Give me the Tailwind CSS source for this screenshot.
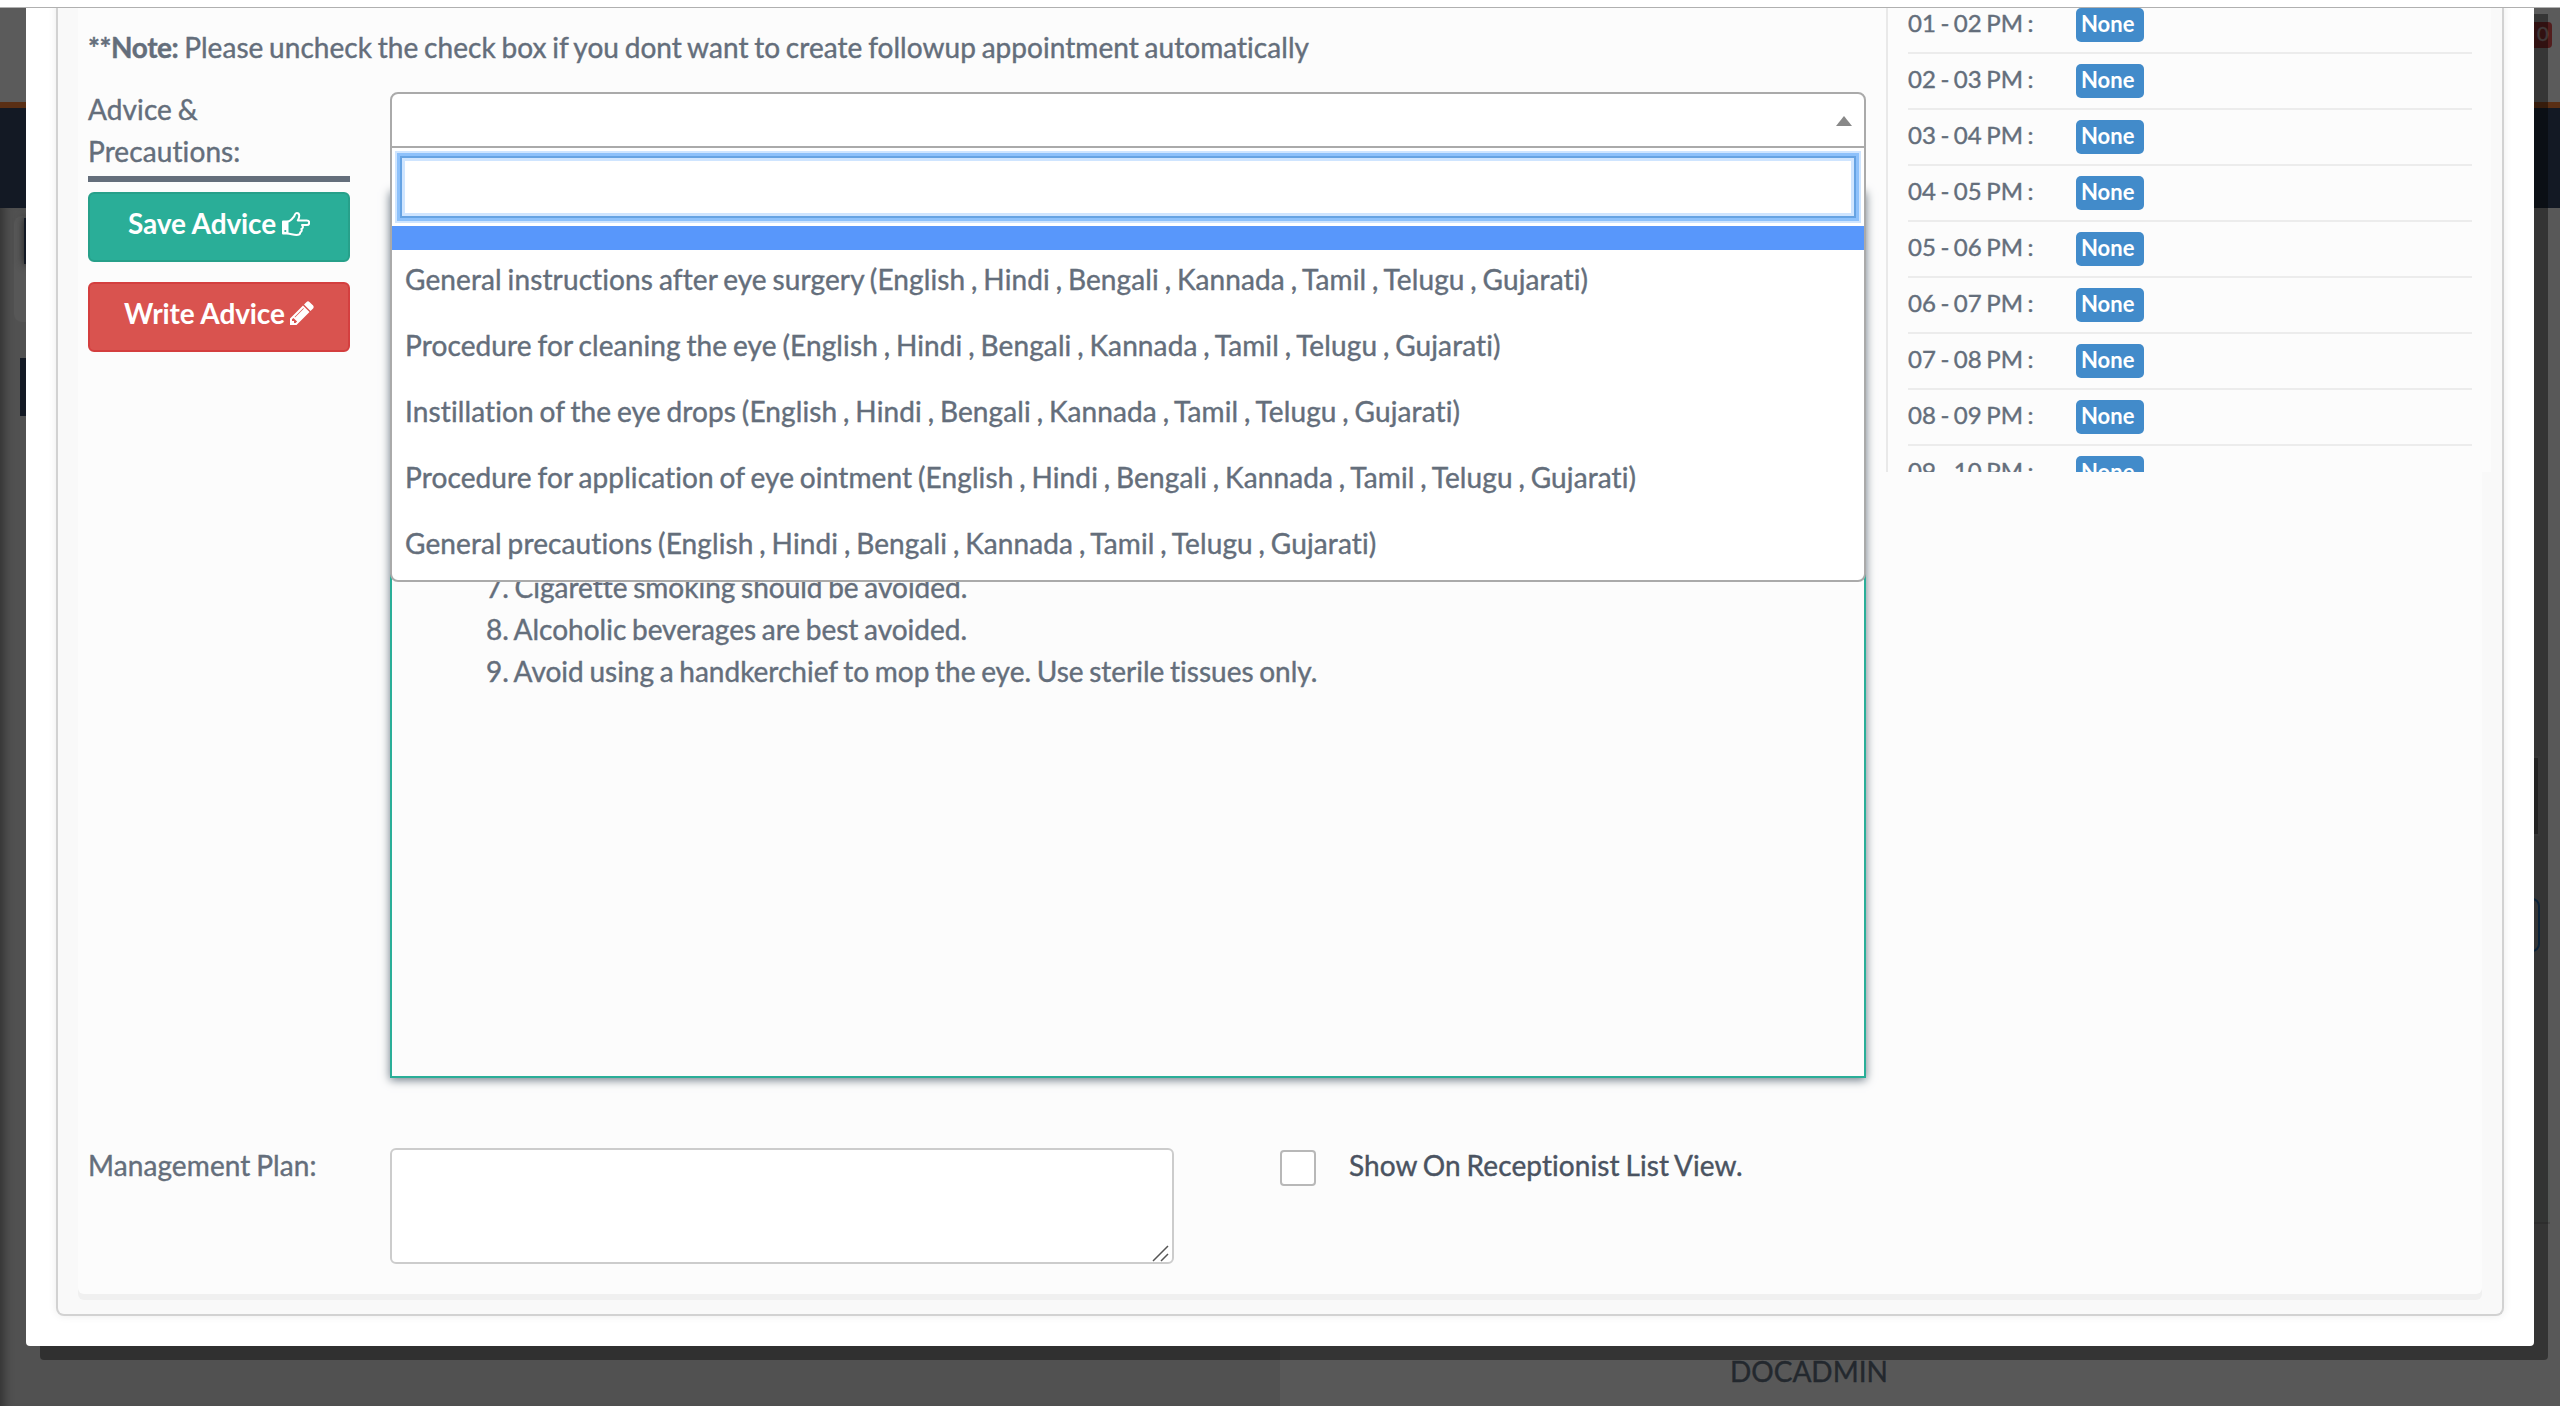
<!DOCTYPE html>
<html lang="en">
<head>
<meta charset="utf-8">
<title>Advice</title>
<script src="https://cdn.jsdelivr.net/npm/@tailwindcss/browser@4"></script>
</head>
<body class="relative h-[1406px] w-[2560px] overflow-hidden bg-[#595959] font-['Lato',sans-serif] text-[28px] leading-[42px] text-[#646e7b] [word-spacing:-1.5px] [font-variant-ligatures:none] [-webkit-text-stroke:0.4px_currentColor]">

<!-- dimmed page behind the modal -->
<div class="absolute inset-0 flex flex-col">
  <div class="h-[102px] bg-[#5b5b5b]"></div>
  <div class="h-[6px] bg-[#5a2f15]"></div>
  <div class="h-[100px] bg-[#131924]"></div>
  <div class="flex flex-1">
    <div class="w-[1280px] bg-[#515151] shadow-[inset_12px_0_10px_-8px_#333]"></div>
    <div class="flex-1 bg-[#585858] pt-[1142px] pl-[450px] text-[#23282e]">DOCADMIN</div>
  </div>
</div>
<div class="absolute top-[216px] left-[14px] h-[106px] w-[40px] rounded-lg bg-[#575757]"></div>
<div class="absolute top-[218px] left-[24px] h-[46px] w-[40px] bg-[#131924] shadow-[0_0_8px_#222]"></div>
<div class="absolute top-[358px] left-[20px] h-[58px] w-[40px] bg-[#131924]"></div>
<div class="absolute top-[22px] left-[2520px] h-[26px] w-[32px] rounded-[4px] bg-[#521d1d] pl-[17px] text-[20px] leading-[23px] text-[#6b6060]">0</div>
<div class="absolute top-[756px] left-[2520px] h-[80px] w-[20px] border-2 border-[#5c5c5c] bg-[#3b3b3b]"></div>
<div class="absolute top-[898px] left-[2500px] h-[54px] w-[40px] rounded-lg border-2 border-[#12395c]"></div>
<div class="absolute top-[1160px] left-[2500px] h-[64px] w-[50px] border-b-2 border-[#4c4c4c] bg-[#545856]"></div>

<!-- modal -->
<div class="absolute top-0 left-[26px] h-[1346px] w-[2508px] rounded-b-[4px] bg-white px-[30px] shadow-[14px_14px_0_rgba(0,0,0,0.4)]">
  <div class="h-[1316px] w-[2448px] rounded-b-[8px] border-2 border-t-0 border-[#d2d2d2] bg-[#f9f9f9] px-[20px] shadow-[0_0_8px_rgba(0,0,0,0.08)]">
    <div class="flex h-[1294px] w-[2404px] rounded-b-[6px] bg-[#fcfcfc] pl-[10px] shadow-[0_6px_0_#f0f0f0]">

      <!-- form column -->
      <div class="flex w-[1798px] shrink-0 flex-col pt-[26px]">
        <p class="h-[62px] tracking-[0.05px]"><b class="tracking-[-0.4px]">**Note:</b> Please uncheck the check box if you dont want to create followup appointment automatically</p>
        <div class="flex h-[1056px]">
          <div class="w-[302px]">
            <div class="h-[94px] w-[262px] border-b-[6px] border-[#646e7b] tracking-[0.1px]">Advice &amp;<br>Precautions:</div>
            <button class="mt-[10px] flex h-[70px] w-[262px] justify-center gap-[6px] rounded-[6px] border-2 border-[#27a08a] bg-[#2aae98] pt-[8px] font-bold text-white [-webkit-text-stroke:0]">
              <span class="tracking-[-0.1px]">Save Advice</span>
              <svg class="mt-[10px] h-[24px] w-[28px]" viewBox="0 0 28 24" fill="none" stroke="#fff" stroke-width="2" stroke-linejoin="round"><path d="M1 9.500h4.500v12H1z" fill="#fff"/><path d="M5.500 9.500c3 0 5-3 6.300-4.700C13 3.200 12.700 1 14.800 1c3.200 0 3 4 1 7.500h9c3.200 0 3.200 4.500 0 4.500H20c1.500 1.600 1 3.500-.6 4 .8 1.800 0 3-1.200 3.400.2 2-1.400 2.600-3.700 2.600-3.500 0-6-1.500-9-1.500"/><circle cx="3.300" cy="19" r="1.100" fill="#2aae98" stroke="none"/></svg>
            </button>
            <button class="mt-[20px] flex h-[70px] w-[262px] justify-center gap-[5px] rounded-[6px] border-2 border-[#d43f3f] bg-[#d9534f] pt-[8px] font-bold text-white [-webkit-text-stroke:0]">
              <span class="tracking-[-0.1px]">Write Advice</span>
              <svg class="mt-[9px] h-[24px] w-[24px]" viewBox="128 128 1536 1536" fill="#fff"><path d="M491 1536l91-91-235-235-91 91v107h128v128h107zm523-928q0-22-22-22-10 0-17 7l-542 542q-7 7-7 17 0 22 22 22 10 0 17-7l542-542q7-7 7-17zm-54-192l416 416-832 832h-416v-416zm683 96q0 53-37 90l-166 166-416-416 166-165q36-38 90-38 53 0 91 38l235 234q37 39 37 91z"/></svg>
            </button>
          </div>

          <div class="relative mt-[4px] w-[1476px]">
            <!-- advice text box, partly under the open list -->
            <div class="absolute top-[98px] left-0 flex h-[888px] w-[1476px] items-start border-2 border-[#2aae98] bg-[#fcfcfc] pt-[374px] pl-[94px] shadow-[0_2px_9px_#6b7884]">
              <div>
                <p>7. Cigarette smoking should be avoided.</p>
                <p>8. Alcoholic beverages are best avoided.</p>
                <p>9. Avoid using a handkerchief to mop the eye. Use sterile tissues only.</p>
              </div>
            </div>
            <!-- open select -->
            <div class="absolute top-0 left-0 h-[490px] w-[1476px] rounded-[8px] border-2 border-[#aaa] bg-white">
              <div class="flex h-[54px] justify-end border-b-2 border-[#aaa] pt-[22px] pr-[12px]">
                <svg class="h-[10px] w-[16px]" viewBox="0 0 16 10"><path d="M8 0l8 10H0z" fill="#888"/></svg>
              </div>
              <div class="px-[8px] pt-[8px] pb-[8px]">
                <div class="h-[62px] border-2 border-[#66a3e3] bg-white shadow-[0_0_0_3px_#8dc1fb,0_0_0_5px_#cfe5ff,inset_0_0_0_3px_#cfe5ff]"></div>
              </div>
              <div class="h-[24px] bg-[#5897fb]"></div>
              <ul class="tracking-[0.12px]">
                <li class="h-[66px] px-[13px] pt-[8px]">General instructions after eye surgery (English , Hindi , Bengali , Kannada , Tamil , Telugu , Gujarati)</li>
                <li class="h-[66px] px-[13px] pt-[8px]">Procedure for cleaning the eye (English , Hindi , Bengali , Kannada , Tamil , Telugu , Gujarati)</li>
                <li class="h-[66px] px-[13px] pt-[8px]">Instillation of the eye drops (English , Hindi , Bengali , Kannada , Tamil , Telugu , Gujarati)</li>
                <li class="h-[66px] px-[13px] pt-[8px]">Procedure for application of eye ointment (English , Hindi , Bengali , Kannada , Tamil , Telugu , Gujarati)</li>
                <li class="h-[66px] px-[13px] pt-[8px]">General precautions (English , Hindi , Bengali , Kannada , Tamil , Telugu , Gujarati)</li>
              </ul>
            </div>
          </div>
        </div>

        <div class="flex tracking-[0.1px]">
          <div class="w-[302px]">Management Plan:</div>
          <div class="mt-[4px] flex h-[116px] w-[784px] items-end justify-end rounded-[6px] border-2 border-[#ccc] bg-white pr-[3px]">
            <svg class="h-[18px] w-[18px]" viewBox="0 0 18 18" stroke="#555" stroke-width="1.500"><path d="M2 17L17 2M10 17l7-7"/></svg>
          </div>
          <div class="mt-[6px] ml-[106px] h-[36px] w-[36px] rounded-[4px] border-2 border-[#b8b8b8] bg-white"></div>
          <div class="ml-[33px] text-[#4a5361]">Show On Receptionist List View.</div>
        </div>
      </div>

      <!-- appointment slots, cut off by the scroll area -->
      <div class="h-[472px] w-[605px] shrink-0 overflow-hidden border-l-2 border-[#e9e9e9] bg-[#fcfcfc] pl-[20px] text-[24px] leading-[34px] [word-spacing:-1.6px]">
        <div class="flex h-[54px] w-[564px] border-b-2 border-[#ececec] pt-[8px]"><span class="w-[168px] -mt-[2px]">01 - 02 PM :</span><span class="h-[34px] w-[68px] rounded-[5px] bg-[#428bca] pl-[5px] text-[22px] leading-[31px] font-bold text-white [-webkit-text-stroke:0]">None</span></div>
        <div class="flex h-[56px] w-[564px] border-b-2 border-[#ececec] pt-[10px]"><span class="w-[168px] -mt-[2px]">02 - 03 PM :</span><span class="h-[34px] w-[68px] rounded-[5px] bg-[#428bca] pl-[5px] text-[22px] leading-[31px] font-bold text-white [-webkit-text-stroke:0]">None</span></div>
        <div class="flex h-[56px] w-[564px] border-b-2 border-[#ececec] pt-[10px]"><span class="w-[168px] -mt-[2px]">03 - 04 PM :</span><span class="h-[34px] w-[68px] rounded-[5px] bg-[#428bca] pl-[5px] text-[22px] leading-[31px] font-bold text-white [-webkit-text-stroke:0]">None</span></div>
        <div class="flex h-[56px] w-[564px] border-b-2 border-[#ececec] pt-[10px]"><span class="w-[168px] -mt-[2px]">04 - 05 PM :</span><span class="h-[34px] w-[68px] rounded-[5px] bg-[#428bca] pl-[5px] text-[22px] leading-[31px] font-bold text-white [-webkit-text-stroke:0]">None</span></div>
        <div class="flex h-[56px] w-[564px] border-b-2 border-[#ececec] pt-[10px]"><span class="w-[168px] -mt-[2px]">05 - 06 PM :</span><span class="h-[34px] w-[68px] rounded-[5px] bg-[#428bca] pl-[5px] text-[22px] leading-[31px] font-bold text-white [-webkit-text-stroke:0]">None</span></div>
        <div class="flex h-[56px] w-[564px] border-b-2 border-[#ececec] pt-[10px]"><span class="w-[168px] -mt-[2px]">06 - 07 PM :</span><span class="h-[34px] w-[68px] rounded-[5px] bg-[#428bca] pl-[5px] text-[22px] leading-[31px] font-bold text-white [-webkit-text-stroke:0]">None</span></div>
        <div class="flex h-[56px] w-[564px] border-b-2 border-[#ececec] pt-[10px]"><span class="w-[168px] -mt-[2px]">07 - 08 PM :</span><span class="h-[34px] w-[68px] rounded-[5px] bg-[#428bca] pl-[5px] text-[22px] leading-[31px] font-bold text-white [-webkit-text-stroke:0]">None</span></div>
        <div class="flex h-[56px] w-[564px] border-b-2 border-[#ececec] pt-[10px]"><span class="w-[168px] -mt-[2px]">08 - 09 PM :</span><span class="h-[34px] w-[68px] rounded-[5px] bg-[#428bca] pl-[5px] text-[22px] leading-[31px] font-bold text-white [-webkit-text-stroke:0]">None</span></div>
        <div class="flex h-[56px] w-[564px] pt-[10px]"><span class="w-[168px] -mt-[2px]">09 - 10 PM :</span><span class="h-[34px] w-[68px] rounded-[5px] bg-[#428bca] pl-[5px] text-[22px] leading-[31px] font-bold text-white [-webkit-text-stroke:0]">None</span></div>
      </div>
    </div>
  </div>
</div>

<!-- bottom edge of the browser toolbar -->
<div class="absolute top-0 left-0 h-[8px] w-full border-b border-[#b0b0b0] bg-white"></div>
</body>
</html>
